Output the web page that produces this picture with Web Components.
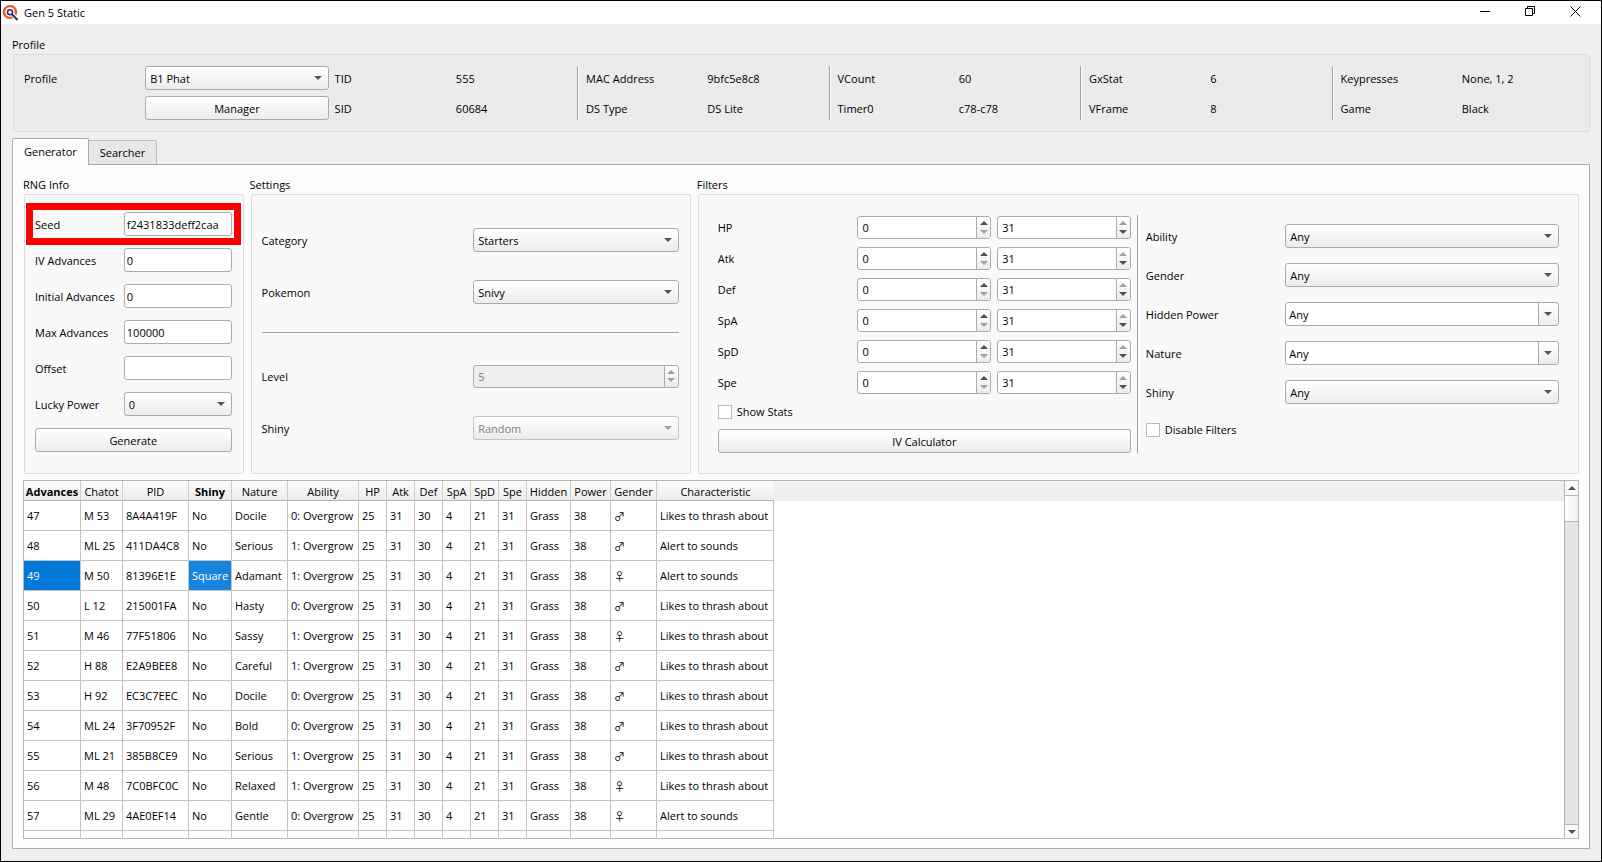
<!DOCTYPE html>
<html lang="en">
<head>
<meta charset="utf-8">
<title>Gen 5 Static</title>
<style>
    html, body {
        height: 100%;
        margin: 0;
    }
    body {
        font: 11px/16px "Open Sans", "Noto Sans", "DejaVu Sans", sans-serif;
        color: #000;
    }
</style>
</head>
<body>
<gen-static-window></gen-static-window>

<script>
// Shared by every element that draws a form control
const controlStyles = `
    * { box-sizing: border-box; }
    label { white-space: nowrap; align-self: center; padding-top: 1px; }
    input, select, button {
        font: inherit;
        color: inherit;
        margin: 0;
        width: 100%;
        min-width: 0;
        height: 24px;
        border: 1px solid #ababab;
        border-radius: 3px;
        appearance: none;
    }
    input { background: #fff; padding: 0 2px; }
    button, select { background: linear-gradient(#fff, #ececec); }
    button { padding: 1px 0 0; text-align: center; }
    select { padding: 1px 20px 0 4px; }
    .combo { display: grid; align-items: center; min-width: 0; }
    .combo > * { grid-area: 1 / 1; }
    .combo svg { justify-self: end; margin-right: 7px; pointer-events: none; fill: #555; }
    .combo.editable select {
        background: linear-gradient(#ababab, #ababab) right 19px top / 1px 100% no-repeat,
                    linear-gradient(#fff, #ececec) right / 19px 100% no-repeat,
                    #fff;
        padding-left: 3px;
    }
`;

const downArrow = `<svg width="8" height="4" viewBox="0 0 8 4"><path d="M0 0h8L4 4z"/></svg>`;
const upArrow = `<svg width="8" height="4" viewBox="0 0 8 4"><path d="M0 4h8L4 0z"/></svg>`;

// <spin-box value min max name>
class SpinBox extends HTMLElement {
    connectedCallback() {
        const value = Number(this.getAttribute('value'));
        const min = Number(this.getAttribute('min') || 0);
        const max = Number(this.getAttribute('max') || 31);
        const name = this.getAttribute('name');
        const disabled = this.hasAttribute('disabled');
        const state = disabled ? 'disabled' : '';

        this.attachShadow({ mode: 'open' }).innerHTML = `
            <style>
                * { box-sizing: border-box; }
                :host {
                    display: flex;
                    box-sizing: border-box;
                    height: 23px;
                    min-width: 0;
                    align-self: center;
                    border: 1px solid #ababab;
                    border-radius: 3px;
                    background: #fff;
                    overflow: hidden;
                }
                :host([disabled]) { background: #efefef; color: #808080; }
                input {
                    flex: 1;
                    min-width: 0;
                    border: 0;
                    padding: 1px 4px 0;
                    font: inherit;
                    color: inherit;
                    background: none;
                    appearance: textfield;
                }
                input::-webkit-inner-spin-button { display: none; }
                .steps {
                    display: flex;
                    flex-direction: column;
                    width: 14px;
                    border-left: 1px solid #ababab;
                    background: linear-gradient(#fff, #ececec);
                }
                button {
                    flex: 1;
                    display: flex;
                    align-items: center;
                    justify-content: center;
                    border: 0;
                    padding: 0;
                    background: none;
                    fill: #505050;
                }
                button:disabled { fill: #a0a0a0; }
                button:first-child { padding-top: 2px; }
                button:last-child { padding-bottom: 2px; }
            </style>
            <input type="number" aria-label="${name}" value="${value}" min="${min}" max="${max}" ${state}>
            <div class="steps">
                <button aria-label="${name} up" ${disabled || value >= max ? 'disabled' : ''}>${upArrow}</button>
                <button aria-label="${name} down" ${disabled || value <= min ? 'disabled' : ''}>${downArrow}</button>
            </div>
        `;
    }
}
customElements.define('spin-box', SpinBox);

// <form-row label type="text|combo|editable" value>, or slotted controls
class FormRow extends HTMLElement {
    connectedCallback() {
        const label = this.getAttribute('label');
        this.attachShadow({ mode: 'open' }).innerHTML = `
            <style>
                ${controlStyles}
                :host {
                    display: grid;
                    grid-template-columns: subgrid;
                    grid-column: 1 / -1;
                    min-height: 23px;
                }
                :host([marked]) {
                    outline: 7px solid #f00;
                    outline-offset: 2px;
                }
                :host([disabled]) select { color: #808080; opacity: 1; border-color: #c4c4c4; }
                :host([disabled]) svg { fill: #a0a0a0; }
            </style>
            <label for="control">${label}</label>
            ${this.control()}
        `;
    }

    control() {
        const type = this.getAttribute('type');
        const value = this.getAttribute('value') || '';
        if (type === 'text') {
            return `<input id="control" type="text" value="${value}">`;
        }
        if (type === 'combo' || type === 'editable') {
            return `
                <div class="combo ${type}">
                    <select id="control" ${this.hasAttribute('disabled') ? 'disabled' : ''}>
                        <option>${value}</option>
                    </select>
                    ${downArrow}
                </div>
            `;
        }
        return '<slot></slot>';
    }
}
customElements.define('form-row', FormRow);

class PushButton extends HTMLElement {
    connectedCallback() {
        this.attachShadow({ mode: 'open' }).innerHTML = `
            <style>
                ${controlStyles}
                :host { display: block; min-width: 0; }
            </style>
            <button type="button"><slot></slot></button>
        `;
    }
}
customElements.define('push-button', PushButton);

class CheckOption extends HTMLElement {
    connectedCallback() {
        this.attachShadow({ mode: 'open' }).innerHTML = `
            <style>
                :host { display: flex; }
                label { display: flex; align-items: center; gap: 5px; height: 14px; }
                input {
                    appearance: none;
                    box-sizing: border-box;
                    width: 14px;
                    height: 14px;
                    margin: 0;
                    border: 1px solid #b9b9b9;
                    background: #fff;
                }
            </style>
            <label><input type="checkbox"><slot></slot></label>
        `;
    }
}
customElements.define('check-option', CheckOption);

class GroupBox extends HTMLElement {
    connectedCallback() {
        this.attachShadow({ mode: 'open' }).innerHTML = `
            <style>
                :host { display: flex; flex-direction: column; min-width: 0; }
                .title { line-height: 15px; padding-bottom: 2px; }
                .frame {
                    flex: 1;
                    margin-left: 1px;
                    border: 1px solid #dcdcdc;
                    border-radius: 2px;
                    background: var(--frame, #f9f9f9);
                }
            </style>
            <div class="title">${this.getAttribute('label')}</div>
            <div class="frame"><slot></slot></div>
        `;
    }
}
customElements.define('group-box', GroupBox);

class ProfilePanel extends HTMLElement {
    connectedCallback() {
        const pairs = [
            ['MAC Address', '9bfc5e8c8', 'DS Type', 'DS Lite'],
            ['VCount', '60', 'Timer0', 'c78-c78'],
            ['GxStat', '6', 'VFrame', '8'],
            ['Keypresses', 'None, 1, 2', 'Game', 'Black']
        ];
        const half = i => pairs.map(p => `<span>${p[i]}</span><span>${p[i + 1]}</span>`);
        this.attachShadow({ mode: 'open' }).innerHTML = `
            <style>
                ${controlStyles}
                :host {
                    display: grid;
                    grid-template-columns: 115fr 183fr 115fr 115fr repeat(4, 3px 115fr 115fr);
                    grid-template-rows: 24px 24px;
                    gap: 6px;
                    padding: 11px 12px 11px 10px;
                    align-items: center;
                }
                i {
                    grid-row: 1 / 3;
                    align-self: stretch;
                    border-left: 1px solid #a0a0a0;
                    border-right: 1px solid #fff;
                    width: 0;
                }
                i:nth-of-type(1) { grid-column: 5; }
                i:nth-of-type(2) { grid-column: 8; }
                i:nth-of-type(3) { grid-column: 11; }
                i:nth-of-type(4) { grid-column: 14; }
                push-button { grid-column: 2; }
                span { white-space: nowrap; padding-top: 1px; }
            </style>
            <i></i><i></i><i></i><i></i>
            <label for="profile">Profile</label>
            <div class="combo">
                <select id="profile"><option>B1 Phat</option></select>
                ${downArrow}
            </div>
            <span>TID</span><span>555</span>${half(0).join('')}
            <push-button>Manager</push-button>
            <span>SID</span><span>60684</span>${half(2).join('')}
        `;
    }
}
customElements.define('profile-panel', ProfilePanel);

class IvFilters extends HTMLElement {
    connectedCallback() {
        const stats = ['HP', 'Atk', 'Def', 'SpA', 'SpD', 'Spe'];
        this.attachShadow({ mode: 'open' }).innerHTML = `
            <style>
                :host { display: flex; gap: 6px; padding: 20px 19px; }
                .ivs, .others { flex: 1; display: grid; align-content: start; min-width: 0; }
                .ivs {
                    grid-template-columns: repeat(3, 1fr);
                    gap: 8px 6px;
                    padding-top: 1px;
                }
                .others {
                    grid-template-columns: 133fr 273fr;
                    gap: 15px 6px;
                    padding-top: 9px;
                }
                .line { width: 1px; border-left: 1px solid #a0a0a0; border-right: 1px solid #fff; }
                check-option, push-button { grid-column: 1 / -1; }
                .ivs check-option { margin: 3px 0 2px; }
                .others check-option { margin-top: 4px; }
            </style>
            <div class="ivs">
                ${stats.map(s => `
                    <form-row label="${s}">
                        <spin-box name="${s} minimum" value="0"></spin-box>
                        <spin-box name="${s} maximum" value="31"></spin-box>
                    </form-row>
                `).join('')}
                <check-option>Show Stats</check-option>
                <push-button>IV Calculator</push-button>
            </div>
            <div class="line"></div>
            <div class="others">
                <form-row label="Ability" type="combo" value="Any"></form-row>
                <form-row label="Gender" type="combo" value="Any"></form-row>
                <form-row label="Hidden Power" type="editable" value="Any"></form-row>
                <form-row label="Nature" type="editable" value="Any"></form-row>
                <form-row label="Shiny" type="combo" value="Any"></form-row>
                <check-option>Disable Filters</check-option>
            </div>
        `;
    }
}
customElements.define('iv-filters', IvFilters);

const columns = [
    ['Advances', 57], ['Chatot', 42], ['PID', 66], ['Shiny', 43], ['Nature', 56], ['Ability', 71],
    ['HP', 28], ['Atk', 28], ['Def', 28], ['SpA', 28], ['SpD', 28], ['Spe', 28],
    ['Hidden', 44], ['Power', 40], ['Gender', 46], ['Characteristic', 117]
];

// advances, chatot, pid, shiny, nature, ability, gender, characteristic
const thrash = 'Likes to thrash about';
const alert = 'Alert to sounds';
const results = [
    [47, 'M 53', '8A4A419F', 'No', 'Docile', 0, '♂', thrash],
    [48, 'ML 25', '411DA4C8', 'No', 'Serious', 1, '♂', alert],
    [49, 'M 50', '81396E1E', 'Square', 'Adamant', 1, '♀', alert],
    [50, 'L 12', '215001FA', 'No', 'Hasty', 0, '♂', thrash],
    [51, 'M 46', '77F51806', 'No', 'Sassy', 1, '♀', thrash],
    [52, 'H 88', 'E2A9BEE8', 'No', 'Careful', 1, '♂', thrash],
    [53, 'H 92', 'EC3C7EEC', 'No', 'Docile', 0, '♂', thrash],
    [54, 'ML 24', '3F70952F', 'No', 'Bold', 0, '♂', thrash],
    [55, 'ML 21', '385B8CE9', 'No', 'Serious', 1, '♂', thrash],
    [56, 'M 48', '7C0BFC0C', 'No', 'Relaxed', 1, '♀', thrash],
    [57, 'ML 29', '4AE0EF14', 'No', 'Gentle', 0, '♀', alert]
];

class ResultTable extends HTMLElement {
    connectedCallback() {
        const rows = results.map(([adv, chatot, pid, shiny, nature, ability, gender, trait]) => {
            const cells = [adv, chatot, pid, shiny, nature, `${ability}: Overgrow`,
                25, 31, 30, 4, 21, 31, 'Grass', 38, gender, trait];
            return `<tr${shiny === 'No' ? '' : ' class="hit"'}>${cells.map(c => `<td>${c}</td>`).join('')}</tr>`;
        });
        const width = columns.reduce((sum, c) => sum + c[1], 0);

        this.attachShadow({ mode: 'open' }).innerHTML = `
            <style>
                * { box-sizing: border-box; }
                :host {
                    display: flex;
                    min-height: 0;
                    border: 1px solid #b5b5b5;
                    background: #fff;
                }
                .view {
                    flex: 1;
                    overflow: hidden;
                    background: linear-gradient(#efefef, #efefef) top / 100% 20px no-repeat;
                }
                table {
                    table-layout: fixed;
                    width: ${width}px;
                    border-spacing: 0;
                }
                th {
                    height: 20px;
                    padding: 2px 0 0;
                    font-weight: normal;
                    background: linear-gradient(#fbfbfb, #ededed);
                    border-right: 1px solid #cfcfcf;
                    border-bottom: 1px solid #b5b5b5;
                }
                th:nth-child(1), th:nth-child(4) { font-weight: bold; }
                th:last-child { border-right: 0; }
                td {
                    height: 30px;
                    padding: 0 0 0 3px;
                    white-space: nowrap;
                    overflow: hidden;
                    background: #fff;
                    border-right: 1px solid #c4c4c4;
                    border-bottom: 1px solid #c4c4c4;
                }
                td:nth-child(15) { font-family: "Noto Sans CJK JP", sans-serif; }
                .hit td:nth-child(1) { background: #0078d7; color: #fff; }
                .hit td:nth-child(4) { background: #1683dc; color: #fff; }
                .scroll {
                    display: flex;
                    flex-direction: column;
                    width: 14px;
                    border-left: 1px solid #b5b5b5;
                    background: #e5e5e5;
                }
                .scroll button {
                    display: flex;
                    align-items: center;
                    justify-content: center;
                    height: 14px;
                    padding: 0;
                    border: 0 solid #b5b5b5;
                    background: #fafafa;
                    fill: #505050;
                }
                .scroll button:last-child { border-top-width: 1px; }
                .thumb {
                    height: 27px;
                    margin-bottom: auto;
                    border: 1px solid #b5b5b5;
                    border-width: 1px 0;
                    background: linear-gradient(90deg, #fff, #f0f0f0);
                }
            </style>
            <div class="view">
                <table>
                    <colgroup>${columns.map(c => `<col style="width: ${c[1]}px">`).join('')}</colgroup>
                    <thead><tr>${columns.map(c => `<th>${c[0]}</th>`).join('')}</tr></thead>
                    <tbody>
                        ${rows.join('')}
                        <tr>${columns.map(() => '<td></td>').join('')}</tr>
                    </tbody>
                </table>
            </div>
            <div class="scroll">
                <button aria-label="Scroll up">${upArrow}</button>
                <div class="thumb"></div>
                <button aria-label="Scroll down">${downArrow}</button>
            </div>
        `;
    }
}
customElements.define('result-table', ResultTable);

class TitleBar extends HTMLElement {
    connectedCallback() {
        this.attachShadow({ mode: 'open' }).innerHTML = `
            <style>
                :host {
                    display: flex;
                    align-items: center;
                    height: 23px;
                    padding-left: 2px;
                    background: #fff;
                }
                .name { flex: 1; margin-left: 5px; }
                button {
                    display: flex;
                    align-items: center;
                    justify-content: center;
                    width: 45px;
                    height: 21px;
                    padding: 0;
                    border: 0;
                    background: none;
                }
                button svg { fill: none; stroke: #000; }
                .buttons { display: flex; margin-right: 3px; align-self: flex-start; }
            </style>
            <svg width="16" height="16" viewBox="0 0 16 16" fill="none">
                <circle cx="7" cy="7" r="6" stroke="#f15a29" stroke-width="2.4"/>
                <circle cx="7" cy="7.200" r="2.500" stroke="#2e2a78" stroke-width="1.500"/>
                <path d="M10 10l5 5" stroke="#fff" stroke-width="4"/>
                <path d="M9 9.200l5.500 5.800" stroke="#2e2a78" stroke-width="2"/>
            </svg>
            <span class="name">Gen 5 Static</span>
            <div class="buttons">
                <button aria-label="Minimize">
                    <svg width="11" height="11"><path d="M0 5.5h10"/></svg>
                </button>
                <button aria-label="Restore">
                    <svg width="11" height="11"><path d="M.5 2.5h7v7h-7zM2.5 2.5v-2h7v7h-2"/></svg>
                </button>
                <button aria-label="Close">
                    <svg width="11" height="11"><path d="M.5.5l10 10M10.5.5l-10 10"/></svg>
                </button>
            </div>
        `;
    }
}
customElements.define('title-bar', TitleBar);

class GenStaticWindow extends HTMLElement {
    connectedCallback() {
        this.attachShadow({ mode: 'open' }).innerHTML = `
            <style>
                * { box-sizing: border-box; }
                :host {
                    display: flex;
                    flex-direction: column;
                    box-sizing: border-box;
                    height: 100vh;
                    border: 1px solid #000;
                    background: #efefef;
                }
                main {
                    flex: 1;
                    display: flex;
                    flex-direction: column;
                    min-height: 0;
                    padding: 13px 11px 12px;
                }
                .profile { --frame: #ebebeb; }
                .tabs {
                    display: flex;
                    align-items: flex-end;
                    margin: 6px 0 -1px;
                    z-index: 1;
                }
                .tabs button {
                    height: 24px;
                    margin-bottom: 1px;
                    padding: 1px 11px 0;
                    border: 1px solid #bdbdbd;
                    border-width: 1px 1px 0 0;
                    border-radius: 0 2px 0 0;
                    background: #e7e7e7;
                    font: inherit;
                    color: inherit;
                }
                .tabs button[aria-selected="true"] {
                    height: 27px;
                    margin-bottom: 0;
                    padding: 0 11px 1px;
                    border: 1px solid #ababab;
                    border-bottom: 0;
                    border-radius: 2px 2px 0 0;
                    background: #fcfcfc;
                }
                .page {
                    flex: 1;
                    display: flex;
                    flex-direction: column;
                    gap: 6px;
                    min-height: 0;
                    padding: 12px 10px 9px;
                    border: 1px solid #ababab;
                    background: #fcfcfc;
                }
                .groups {
                    display: grid;
                    grid-template-columns: 1fr 2fr 4fr;
                    gap: 6px;
                }
                .rng, .settings { display: grid; align-content: start; }
                .rng {
                    grid-template-columns: 83fr 108fr;
                    gap: 12px 6px;
                    padding: 17px 11px 21px 10px;
                }
                .rng push-button { grid-column: 1 / -1; }
                .settings {
                    grid-template-columns: 1fr 1fr;
                    gap: 28px 6px;
                    padding: 33px 11px 0 10px;
                }
                .settings form-row { min-height: 24px; }
                hr {
                    grid-column: 1 / -1;
                    width: 100%;
                    height: 4px;
                    margin: 0;
                    border: 0;
                    border-top: 1px solid #a0a0a0;
                }
                result-table { flex: 1; }
            </style>
            <title-bar></title-bar>
            <main>
                <group-box class="profile" label="Profile"><profile-panel></profile-panel></group-box>
                <div class="tabs" role="tablist">
                    <button role="tab" aria-selected="true">Generator</button>
                    <button role="tab" aria-selected="false">Searcher</button>
                </div>
                <div class="page">
                    <div class="groups">
                        <group-box label="RNG Info">
                            <div class="rng">
                                <form-row label="Seed" type="text" value="f2431833deff2caa" marked></form-row>
                                <form-row label="IV Advances" type="text" value="0"></form-row>
                                <form-row label="Initial Advances" type="text" value="0"></form-row>
                                <form-row label="Max Advances" type="text" value="100000"></form-row>
                                <form-row label="Offset" type="text"></form-row>
                                <form-row label="Lucky Power" type="combo" value="0"></form-row>
                                <push-button>Generate</push-button>
                            </div>
                        </group-box>
                        <group-box label="Settings">
                            <div class="settings">
                                <form-row label="Category" type="combo" value="Starters"></form-row>
                                <form-row label="Pokemon" type="combo" value="Snivy"></form-row>
                                <hr>
                                <form-row label="Level">
                                    <spin-box name="Level" value="5" max="100" disabled></spin-box>
                                </form-row>
                                <form-row label="Shiny" type="combo" value="Random" disabled></form-row>
                            </div>
                        </group-box>
                        <group-box label="Filters"><iv-filters></iv-filters></group-box>
                    </div>
                    <result-table></result-table>
                </div>
            </main>
        `;
    }
}
customElements.define('gen-static-window', GenStaticWindow);
</script>
</body>
</html>
